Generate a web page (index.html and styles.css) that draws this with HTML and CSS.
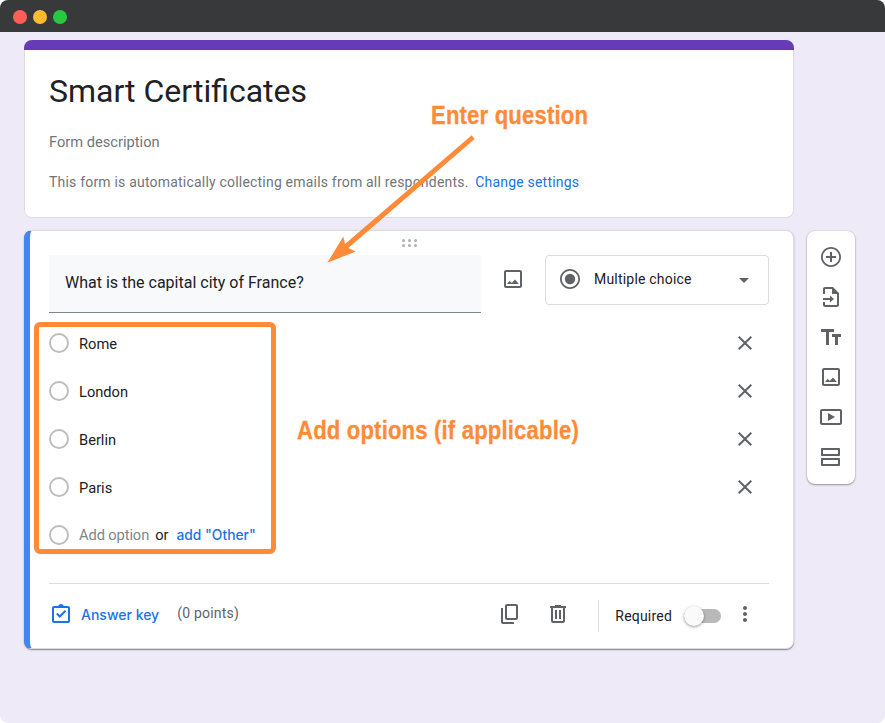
FILE: index.html
```html
<!DOCTYPE html>
<html lang="en">
<head>
    <meta charset="UTF-8">
    <meta name="viewport" content="width=device-width, initial-scale=1.0">
    <title>Smart Certificates</title>
    <link rel="stylesheet" href="styles.css">
</head>
<body>

    <!-- shared icons -->
    <svg class="sprite" width="0" height="0">
        <symbol id="icon-image" viewBox="0 0 24 24">
            <path d="M19 5v14H5V5h14m0-2H5c-1.1 0-2 .9-2 2v14c0 1.1.9 2 2 2h14c1.1 0 2-.9 2-2V5c0-1.1-.9-2-2-2z"/>
            <path d="M6 17l2.700-3.200 2 2.200 3.300-3.500 3.800 4.500z"/>
        </symbol>
        <symbol id="icon-close" viewBox="0 0 24 24">
            <path d="M19 6.410L17.590 5 12 10.590 6.410 5 5 6.410 10.590 12 5 17.590 6.410 19 12 13.410 17.590 19 19 17.590 13.410 12z"/>
        </symbol>
    </svg>

    <div class="window">
        <div class="titlebar">
            <span class="dot red"></span>
            <span class="dot yellow"></span>
            <span class="dot green"></span>
        </div>

        <div class="page">
            <main class="form">
                <section class="card form-header">
                    <h1>Smart Certificates</h1>
                    <p class="description">Form description</p>
                    <p class="notice">This form is automatically collecting emails from all respondents. <a href="#">Change settings</a></p>
                </section>

                <section class="card question">
                    <div class="drag">
                        <svg width="16" height="8" viewBox="0 0 16 8">
                            <circle cx="1.5" cy="1.5" r="1.5"/><circle cx="7.5" cy="1.5" r="1.5"/><circle cx="13.5" cy="1.5" r="1.5"/>
                            <circle cx="1.5" cy="6.5" r="1.5"/><circle cx="7.5" cy="6.5" r="1.5"/><circle cx="13.5" cy="6.5" r="1.5"/>
                        </svg>
                    </div>

                    <div class="question-row">
                        <div class="question-title">What is the capital city of France?</div>
                        <svg class="icon"><use href="#icon-image"/></svg>
                        <div class="type-select">
                            <svg class="icon" viewBox="0 0 24 24">
                                <path d="M12 2C6.480 2 2 6.480 2 12s4.480 10 10 10 10-4.480 10-10S17.520 2 12 2zm0 18.200c-4.500 0-8.200-3.700-8.200-8.200S7.500 3.800 12 3.800s8.200 3.700 8.200 8.200-3.700 8.200-8.200 8.200z"/>
                                <circle cx="12" cy="12" r="5.2"/>
                            </svg>
                            <span>Multiple choice</span>
                            <i class="caret"></i>
                        </div>
                    </div>

                    <ul class="options">
                        <li><i class="radio"></i><span>Rome</span><svg class="icon"><use href="#icon-close"/></svg></li>
                        <li><i class="radio"></i><span>London</span><svg class="icon"><use href="#icon-close"/></svg></li>
                        <li><i class="radio"></i><span>Berlin</span><svg class="icon"><use href="#icon-close"/></svg></li>
                        <li><i class="radio"></i><span>Paris</span><svg class="icon"><use href="#icon-close"/></svg></li>
                        <li class="add-row"><i class="radio"></i><span class="add-option">Add option</span><span class="or">or</span><a class="add-other" href="#">add "Other"</a></li>
                    </ul>

                    <footer class="question-footer">
                        <svg class="icon blue" viewBox="0 0 24 24">
                            <path d="M19 4h-4.200a3 3 0 0 0-5.600 0H5a2 2 0 0 0-2 2v13c0 1.100.9 2 2 2h14a2 2 0 0 0 2-2V6a2 2 0 0 0-2-2zm0 15H5V6h14z"/>
                            <path d="M7.100 12.200l1.400-1.400 2.300 2.300 5-5 1.400 1.400-6.400 6.400z"/>
                        </svg>
                        <a class="answer-key" href="#">Answer key</a>
                        <span class="points">(0 points)</span>

                        <div class="actions">
                            <svg class="icon" viewBox="0 0 24 24">
                                <path d="M18 2H9c-1.100 0-2 .9-2 2v12c0 1.100.9 2 2 2h9c1.100 0 2-.9 2-2V4c0-1.100-.9-2-2-2zm0 14H9V4h9v12zM3 15V6h2v14h11v2H5c-1.100 0-2-.9-2-2v-5z"/>
                            </svg>
                            <svg class="icon" viewBox="0 0 24 24">
                                <path d="M15 4V3H9v1H4v2h1v13c0 1.100.9 2 2 2h10c1.100 0 2-.9 2-2V6h1V4h-5zm2 15H7V6h10v13zM9 8h2v9H9zm4 0h2v9h-2z"/>
                            </svg>
                        </div>
                        <div class="required">
                            <span>Required</span>
                            <div class="toggle"><i class="knob"></i></div>
                            <svg class="icon" viewBox="0 0 24 24">
                                <path d="M12 8c1.100 0 2-.9 2-2s-.9-2-2-2-2 .9-2 2 .9 2 2 2zm0 2c-1.100 0-2 .9-2 2s.9 2 2 2 2-.9 2-2-.9-2-2-2zm0 6c-1.100 0-2 .9-2 2s.9 2 2 2 2-.9 2-2-.9-2-2-2z"/>
                            </svg>
                        </div>
                    </footer>
                </section>
            </main>

            <aside class="toolbar">
                <svg class="icon" viewBox="0 0 24 24">
                    <path d="M13 7h-2v4H7v2h4v4h2v-4h4v-2h-4V7zm-1-5C6.480 2 2 6.480 2 12s4.480 10 10 10 10-4.480 10-10S17.520 2 12 2zm0 18.200c-4.500 0-8.200-3.700-8.200-8.200S7.500 3.800 12 3.800s8.200 3.700 8.200 8.200-3.700 8.200-8.200 8.200z"/>
                </svg>
                <svg class="icon" viewBox="0 0 24 24">
                    <path d="M14 2H6c-1.100 0-2 .9-2 2v5h2V4h7v5h5v11H6v-3H4v3c0 1.100.9 2 2 2h12c1.100 0 2-.9 2-2V8l-6-6z"/>
                    <path d="M4 13h7v-2.500l4 3.500-4 3.500V15H4z"/>
                </svg>
                <svg class="icon" viewBox="0 0 24 24">
                    <path d="M2 4v3h5v13h3V7h5V4H2zm20 5h-9v3h3v8h3v-8h3V9z"/>
                </svg>
                <svg class="icon"><use href="#icon-image"/></svg>
                <svg class="icon" viewBox="0 0 24 24">
                    <path d="M21 4H3c-1.100 0-2 .9-2 2v12c0 1.100.9 2 2 2h18c1.100 0 2-.9 2-2V6c0-1.100-.9-2-2-2zm0 14H3V6h18v12zM9 8v8l7-4z"/>
                </svg>
                <svg class="icon" viewBox="0 0 24 24">
                    <path d="M19 5v4H4V5h15m0-2H3c-.6 0-1 .4-1 1v6c0 .6.4 1 1 1h17c.6 0 1-.4 1-1V4c0-.6-.4-1-1-1zm0 12v4H4v-4h15m0-2H3c-.6 0-1 .4-1 1v6c0 .6.4 1 1 1h17c.6 0 1-.4 1-1v-6c0-.6-.4-1-1-1z"/>
                </svg>
            </aside>
        </div>

        <!-- tutorial callouts -->
        <svg class="arrow" width="150" height="132" viewBox="0 0 150 132">
            <path d="M144.700 .3l2.900 3.800L21.300 113l7.400 3.500L.3 127.800l16-26.200L18 109z"/>
        </svg>
        <div class="callout callout-question">Enter question</div>
        <div class="callout callout-options">Add options (if applicable)</div>
        <div class="outline"></div>
    </div>

</body>
</html>
```
FILE: styles.css
```css
* {
    box-sizing: border-box;
}

body {
    margin: 0;
    background: #fff;
    font-family: Roboto, sans-serif;
    font-size: 14px;
    color: #202124;
}

h1, p, ul {
    margin: 0;
    padding: 0;
    font-weight: normal;
}

a {
    color: #1a73e8;
    text-decoration: none;
}

.sprite {
    display: none;
}

.window {
    position: relative;
    width: 885px;
    height: 723px;
    background: #eeeaf8;
    border-radius: 8px;
    overflow: hidden;
}

.titlebar {
    display: flex;
    align-items: center;
    gap: 6px;
    height: 32px;
    padding: 2px 0 0 13px;
    background: #38393a;
}

.dot {
    width: 14px;
    height: 14px;
    border-radius: 50%;
}

.red { background: #ff5f57; }
.yellow { background: #febc2e; }
.green { background: #28c840; }

.page {
    display: flex;
    align-items: flex-start;
    gap: 13px;
    padding: 8px 0 0 24px;
}

.form {
    display: flex;
    flex-direction: column;
    gap: 12px;
    width: 770px;
}

.card {
    background: #fff;
    border: 1px solid #dadce0;
    border-radius: 8px;
    overflow: hidden;
}

/* the purple strip covers the full card width, so the sides are drawn as a shadow */
.form-header {
    height: 178px;
    padding: 0 25px;
    border: 0;
    box-shadow: inset 0 0 0 1px #dadce0;
}

.form-header::before {
    content: "";
    display: block;
    height: 10px;
    margin: 0 -25px;
    background: #673ab7;
}

.form-header h1 {
    margin-top: 21px;
    font-size: 32px;
    line-height: 40px;
}

.description {
    margin-top: 21px;
    font-size: 14.67px;
    line-height: 20px;
    color: #70757a;
}

.notice {
    margin-top: 20px;
    line-height: 20px;
    letter-spacing: .2px;
    color: #70757a;
}

.notice a {
    margin-left: 3px;
}

.question {
    height: 419px;
    padding: 0 24px 0 19px;
    border-left: 6px solid #4285f4;
    box-shadow: 0 1px 1px rgba(0,0,0,.35), 0 1px 3px rgba(0,0,0,.12);
}

.drag {
    display: flex;
    justify-content: center;
    height: 24px;
    padding: 8px 0 0 2px;
    fill: #b0b0b0;
}

.question-row {
    display: flex;
    align-items: flex-start;
}

.question-title {
    width: 432px;
    height: 58px;
    padding: 18px 16px;
    background: #f8f9fa;
    border-bottom: 1px solid #80868b;
    font-size: 16px;
    line-height: 20px;
}

.icon {
    width: 24px;
    height: 24px;
    flex: none;
    fill: #5f6368;
}

.question-row > .icon {
    margin: 12px 20px;
}

.type-select {
    display: flex;
    align-items: center;
    flex: 1;
    height: 50px;
    padding: 0 19px 2px 12px;
    border: 1px solid #dadce0;
    border-radius: 4px;
}

.type-select span {
    margin-left: 12px;
    letter-spacing: .2px;
}

.caret {
    margin: 2px 0 0 auto;
    border: 5px solid transparent;
    border-top-color: #5f6368;
    border-bottom: 0;
}

.options {
    list-style: none;
    margin-top: 6px;
}

.options li {
    display: flex;
    align-items: center;
    height: 48px;
    padding-right: 12px;
    font-size: 14.67px;
}

.options span {
    padding-top: 2px;
}

.options .icon {
    margin-left: auto;
}

.radio {
    width: 20px;
    height: 20px;
    margin-right: 10px;
    border: 2px solid #bdbdbd;
    border-radius: 50%;
}

.options .add-row span {
    padding: 0 0 1px;
}

.options .add-option {
    color: #80868b;
    letter-spacing: -.1px;
}

.options .or {
    margin: 0 8px 0 6px;
}

.add-other,
.answer-key {
    font-family: Inter, sans-serif;
    font-size: 14px;
    font-weight: 500;
}

.add-other {
    font-size: 13.8px;
}

.question-footer {
    display: flex;
    align-items: center;
    height: 61px;
    margin-top: 24px;
    border-top: 1px solid #dadce0;
}

.icon.blue {
    fill: #1a73e8;
}

.answer-key {
    margin: 0 18px 0 8px;
}

.points {
    padding-bottom: 2px;
    color: #5f6368;
    letter-spacing: .2px;
}

.actions {
    display: flex;
    gap: 24px;
    margin-left: auto;
}

.required {
    display: flex;
    align-items: center;
    height: 32px;
    margin: 4px 0 0 28px;
    padding: 0 12px 0 16px;
    border-left: 1px solid #dadce0;
}

.required span {
    letter-spacing: .2px;
}

.required .icon {
    margin-bottom: 4px;
}

.toggle {
    width: 37px;
    height: 14px;
    margin: 0 12px;
    background: #b9b9b9;
    border-radius: 7px;
}

.knob {
    display: block;
    width: 20px;
    height: 20px;
    margin-top: -3px;
    background: #fafafa;
    border-radius: 50%;
    box-shadow: 0 1px 3px rgba(0,0,0,.4);
}

.toolbar {
    display: flex;
    flex-direction: column;
    align-items: center;
    gap: 16px;
    width: 48px;
    height: 253px;
    margin-top: 191px;
    padding-top: 14px;
    background: #fff;
    border-radius: 8px;
    box-shadow: 0 1px 2px rgba(0,0,0,.35), 0 0 2px rgba(0,0,0,.15);
}

/* callouts lie over the form */
.callout {
    position: absolute;
    color: #ff8b38;
    font: bold 26.500px/32px "Liberation Sans", Arial, sans-serif;
    letter-spacing: .2px;
    white-space: nowrap;
    transform: scaleX(.834);
    transform-origin: 0 0;
    -webkit-text-stroke: .3px #ff8b38;
}

.callout-question {
    left: 431px;
    top: 99px;
}

.callout-options {
    left: 297px;
    top: 414px;
}

.arrow {
    position: absolute;
    left: 327px;
    top: 135px;
    fill: #ff8b38;
}

.outline {
    position: absolute;
    left: 34px;
    top: 322px;
    width: 242px;
    height: 232px;
    border: 5px solid #ff8b38;
    border-radius: 6px;
}
```
